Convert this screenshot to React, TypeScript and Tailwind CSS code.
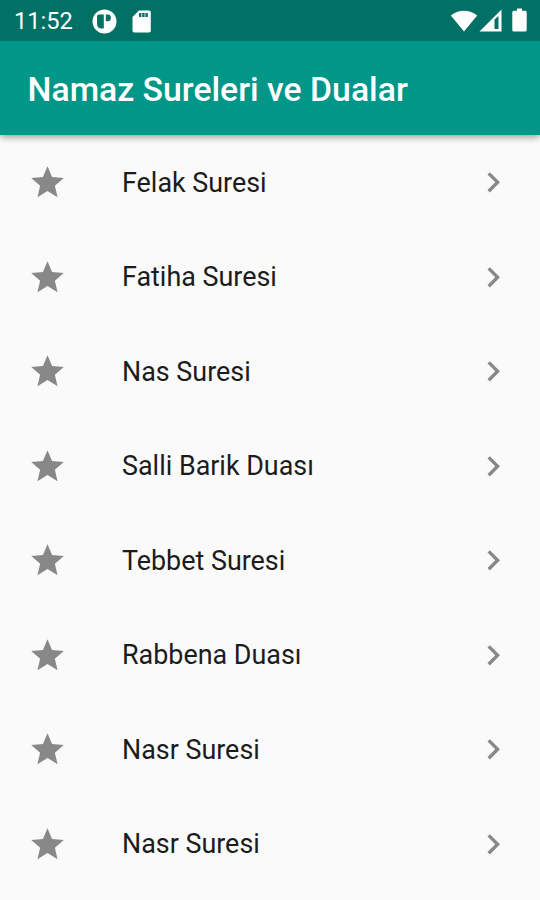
const items = [
  "Felak Suresi",
  "Fatiha Suresi",
  "Nas Suresi",
  "Salli Barik Duası",
  "Tebbet Suresi",
  "Rabbena Duası",
  "Nasr Suresi",
  "Nasr Suresi",
];

function StatusBar() {
  return (
    <div className="flex h-[40.5px] items-center bg-[#017165] pl-[14px] pr-[12px] text-white">
      <span className="w-[78px] text-[23.6px] leading-none whitespace-nowrap pt-[4px]">11:52</span>
      {/* notifications */}
      <svg className="mt-[2px] h-[25px] w-[25px]" viewBox="0 0 25 25">
        <circle cx="12.5" cy="12.5" r="12" fill="currentColor" />
        <path d="M7 5.500h4.800v14H9.500A4.500 4.500 0 0 1 5 15V7.500a2 2 0 0 1 2-2z" fill="#017165" />
        <path d="M13.800 5.500h2a3 3 0 0 1 3 3v.8a3 3 0 0 1-3 3h-2z" fill="#017165" />
      </svg>
      <svg className="ml-[15px] mt-[2px] h-[23px] w-[19px]" viewBox="0 0 19 23">
        <path
          d="M7 .5h10a1.800 1.800 0 0 1 1.800 1.800v18.400a1.800 1.800 0 0 1-1.800 1.800H2.300A1.800 1.800 0 0 1 .5 20.700V7z"
          fill="currentColor"
        />
        <path d="M7 3h2.400v4H7zM10.200 3h2.400v4h-2.400zM13.400 3h2.400v4h-2.400z" fill="#017165" />
      </svg>
      {/* wifi, signal, battery */}
      <svg className="ml-auto h-[23px] w-[28px]" viewBox="0 0 28 23">
        <path d="M.8 6.500a21 21 0 0 1 26.400 0L14 22.500z" fill="currentColor" />
      </svg>
      <svg className="ml-px h-[23px] w-[23px]" viewBox="0 0 23 23">
        <path
          d="M22.500.5v22H.5zM15.500 10.500v9.500h4V7z"
          fill="currentColor"
          fillRule="evenodd"
        />
      </svg>
      <svg className="ml-[10px] mr-px h-[24px] w-[15px]" viewBox="0 0 15 24">
        <path
          d="M5 .5h5v2.300h3.200a1.500 1.500 0 0 1 1.500 1.500V22a1.500 1.500 0 0 1-1.500 1.500H1.800A1.500 1.500 0 0 1 .3 22V4.300a1.500 1.500 0 0 1 1.500-1.500H5z"
          fill="currentColor"
        />
      </svg>
    </div>
  );
}

function StarIcon() {
  return (
    <svg className="mt-px h-[39px] w-[39px] shrink-0 text-[#888888]" viewBox="0 0 24 24">
      <path
        d="M12 17.270L18.180 21l-1.640-7.030L22 9.240l-7.190-.61L12 2 9.190 8.630 2 9.240l5.460 4.730L5.820 21z"
        fill="currentColor"
      />
    </svg>
  );
}

function ChevronIcon() {
  return (
    <svg className="ml-auto h-[40.5px] w-[40.5px] shrink-0 text-[#888888]" viewBox="0 0 24 24">
      <path d="M10 6L8.590 7.410 13.170 12l-4.580 4.590L10 18l6-6z" fill="currentColor" />
    </svg>
  );
}

export default function App() {
  return (
    <div className="h-[900px] w-full overflow-hidden bg-[#fafafa] font-[Roboto,sans-serif]">
      <header className="relative shadow-[0_2px_7px_rgba(0,0,0,0.4)]">
        <StatusBar />
        <div className="flex h-[94.5px] items-center bg-[#009688] px-[27.5px]">
          <h1 className="pt-[4px] text-[33.75px] font-medium leading-none whitespace-nowrap text-white">
            Namaz Sureleri ve Dualar
          </h1>
        </div>
      </header>
      <ul>
        {items.map((item, i) => (
          <li key={i} className="flex h-[94.5px] items-center pl-[28px] pr-[27px]">
            <StarIcon />
            <span className="ml-[55px] pt-[2px] text-[26.9px] leading-none whitespace-nowrap text-[#1c1c1c]">
              {item}
            </span>
            <ChevronIcon />
          </li>
        ))}
      </ul>
    </div>
  );
}
